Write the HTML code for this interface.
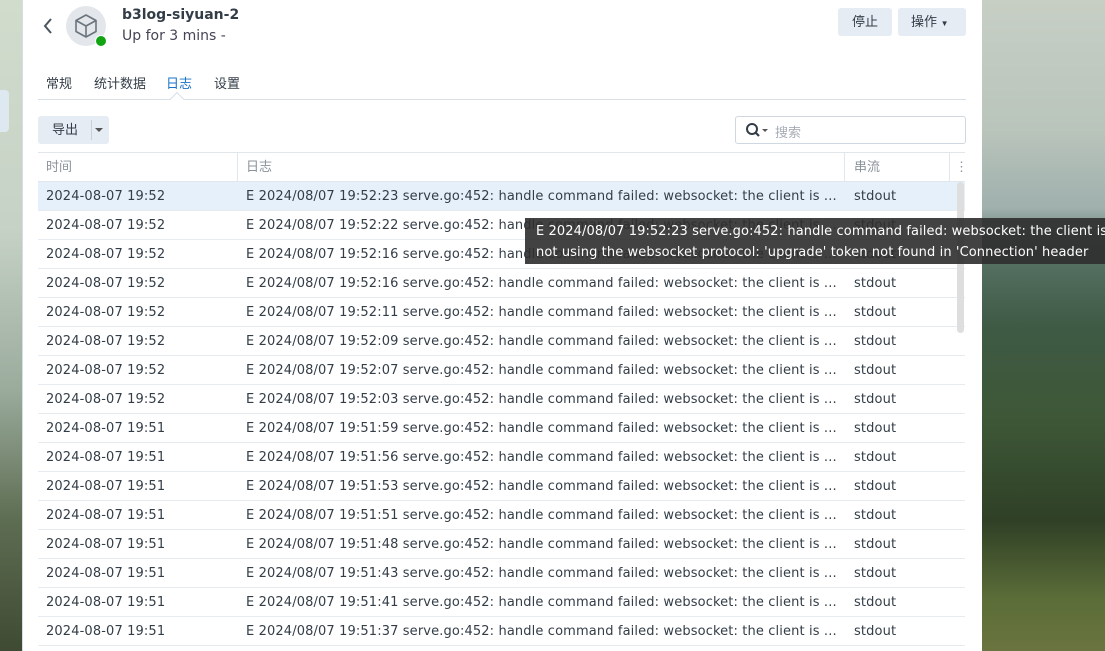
<!DOCTYPE html>
<html><head><meta charset="utf-8"><style>
*{box-sizing:border-box;margin:0;padding:0}
body{width:1105px;height:651px;overflow:hidden;position:relative;font-family:"Liberation Sans","Noto Sans CJK SC",sans-serif;font-size:13px;color:#333d47;background:#555}
.bgr{position:absolute;left:982px;top:0;width:123px;height:651px;background:linear-gradient(180deg,#c7cfc5 0%,#b9c4bb 20%,#9fb0ad 32%,#5a7568 38%,#3f5a45 50%,#3d5736 65%,#2f4026 80%,#5b6d38 92%,#6a7440 100%)}
.bgl{position:absolute;left:0;top:0;width:22px;height:651px;background:linear-gradient(180deg,#d2dccd 0%,#c6d2c6 35%,#9aab9c 60%,#5d6d52 80%,#3f4a33 100%)}
.bgl2{position:absolute;left:0;top:90px;width:9px;height:42px;background:#dde8f0;border-radius:0 4px 4px 0}
.panel{position:absolute;left:22px;top:0;width:960px;height:651px;background:#fff;border-left:1px solid #d6dde3}
.abs{position:absolute}
.tabs span{position:absolute;top:73px;font-size:13px;color:#333d47}
.row{position:absolute;left:38px;width:927px;height:29px;border-bottom:1px solid #e6ebf0;line-height:30px;white-space:nowrap;font-family:"DejaVu Sans",sans-serif;font-size:13px;letter-spacing:0.13px}
.row span{position:absolute}
.c1{left:8px}.c2{left:208px}.c3{left:816px}
.tip{position:absolute;left:525px;top:218px;width:600px;height:46px;background:rgba(45,45,45,.9);color:#fff;font-family:"DejaVu Sans",sans-serif;font-size:13px;letter-spacing:0.1px;line-height:21px;padding:3px 0 0 11px;white-space:nowrap}
</style></head><body>
<div class="bgl"></div><div class="bgl2"></div>
<div class="bgr"></div>
<div class="panel"></div>
<svg class="abs" style="left:42px;top:17px" width="12" height="18" viewBox="0 0 12 18"><path d="M9 2 L3 9 L9 16" fill="none" stroke="#4a5560" stroke-width="2"/></svg>
<div class="abs" style="left:66px;top:6px;width:40px;height:40px;border-radius:50%;background:#e3e7ec"></div>
<svg class="abs" style="left:74px;top:13px" width="24" height="26" viewBox="0 0 24 26"><path d="M12 2 L22 7.5 L22 18.5 L12 24 L2 18.5 L2 7.5 Z M2 7.5 L12 13 L22 7.5 M12 13 L12 24" fill="none" stroke="#6b737c" stroke-width="1.6" stroke-linejoin="round"/></svg>
<div class="abs" style="left:95px;top:35px;width:12px;height:12px;border-radius:50%;background:#12a312;border:1.5px solid #fff"></div>
<div class="abs" style="left:122px;top:7px;font-weight:bold;color:#333d47;font-family:'DejaVu Sans',sans-serif;font-size:14px">b3log-siyuan-2</div>
<div class="abs" style="left:122px;top:28px;font-size:14px;color:#445;font-family:'DejaVu Sans',sans-serif">Up for 3 mins -</div>
<div class="abs" style="left:838px;top:8px;width:54px;height:28px;background:#e6ecf3;border-radius:3px;text-align:center;line-height:28px">停止</div>
<div class="abs" style="left:898px;top:8px;width:68px;height:28px;background:#e6ecf3;border-radius:3px;line-height:28px;padding-left:13px">操作 <span style="font-size:8px">▼</span></div>
<div class="tabs"><span style="left:46px">常规</span><span style="left:94px">统计数据</span><span style="left:166px;color:#1a73c9">日志</span><span style="left:214px">设置</span></div>
<div class="abs" style="left:38px;top:99px;width:928px;height:1px;background:#d8e0e7"></div>
<div class="abs" style="left:172px;top:94px;width:10px;height:10px;background:#fff;border-left:1px solid #d8e0e7;border-top:1px solid #d8e0e7;transform:rotate(45deg)"></div>
<div class="abs" style="left:38px;top:116px;width:71px;height:28px;background:#e6ecf3;border-radius:3px"></div>
<div class="abs" style="left:52px;top:121px;line-height:18px">导出</div>
<div class="abs" style="left:91px;top:120px;width:1px;height:20px;background:#c8d0d8"></div>
<div class="abs" style="left:95px;top:128px;width:0;height:0;border-left:4px solid transparent;border-right:4px solid transparent;border-top:4px solid #555"></div>
<div class="abs" style="left:735px;top:116px;width:231px;height:28px;border:1px solid #cfd8e0;border-radius:3px"></div>
<svg class="abs" style="left:745px;top:122px" width="16" height="16" viewBox="0 0 16 16"><circle cx="7" cy="7" r="5" fill="none" stroke="#333d47" stroke-width="2"/><path d="M10.5 10.5 L14 14" stroke="#333d47" stroke-width="2.2"/></svg>
<div class="abs" style="left:762px;top:129px;width:0;height:0;border-left:3px solid transparent;border-right:3px solid transparent;border-top:3px solid #555"></div>
<div class="abs" style="left:775px;top:122px;color:#a5adb5">搜索</div>
<div class="abs" style="left:38px;top:152px;width:927px;height:30px;border-top:1px solid #e0e6ec;border-bottom:1px solid #e0e6ec;color:#8a939c;line-height:28px">
<span class="abs" style="left:8px">时间</span><span class="abs" style="left:199px;top:0;width:1px;height:29px;background:#e0e6ec"></span><span class="abs" style="left:208px">日志</span><span class="abs" style="left:806px;top:0;width:1px;height:29px;background:#e0e6ec"></span><span class="abs" style="left:816px">串流</span><span class="abs" style="left:911px;top:0;width:1px;height:29px;background:#e0e6ec"></span><span class="abs" style="left:917px">⋮</span></div>
<div id="rows"></div>
<div class="abs" style="left:957px;top:182px;width:7px;height:151px;background:#dedede;border-radius:4px"></div>
<div class="tip">E 2024/08/07 19:52:23 serve.go:452: handle command failed: websocket: the client is<br>not using the websocket protocol: 'upgrade' token not found in 'Connection' header</div>
<script>
var d=[["19:52","19:52:23"],["19:52","19:52:22"],["19:52","19:52:16"],["19:52","19:52:16"],["19:52","19:52:11"],["19:52","19:52:09"],["19:52","19:52:07"],["19:52","19:52:03"],["19:51","19:51:59"],["19:51","19:51:56"],["19:51","19:51:53"],["19:51","19:51:51"],["19:51","19:51:48"],["19:51","19:51:43"],["19:51","19:51:41"],["19:51","19:51:37"]];
var h="";d.forEach(function(r,i){h+='<div class="row" style="top:'+(182+i*29)+'px;'+(i==0?'background:#e6f0fb;':'')+'"><span class="c1">2024-08-07 '+r[0]+'</span><span class="c2">E 2024/08/07 '+r[1]+' serve.go:452: handle command failed: websocket: the client is ...</span><span class="c3">stdout</span></div>'});
document.getElementById("rows").innerHTML=h;
</script>
</body></html>
